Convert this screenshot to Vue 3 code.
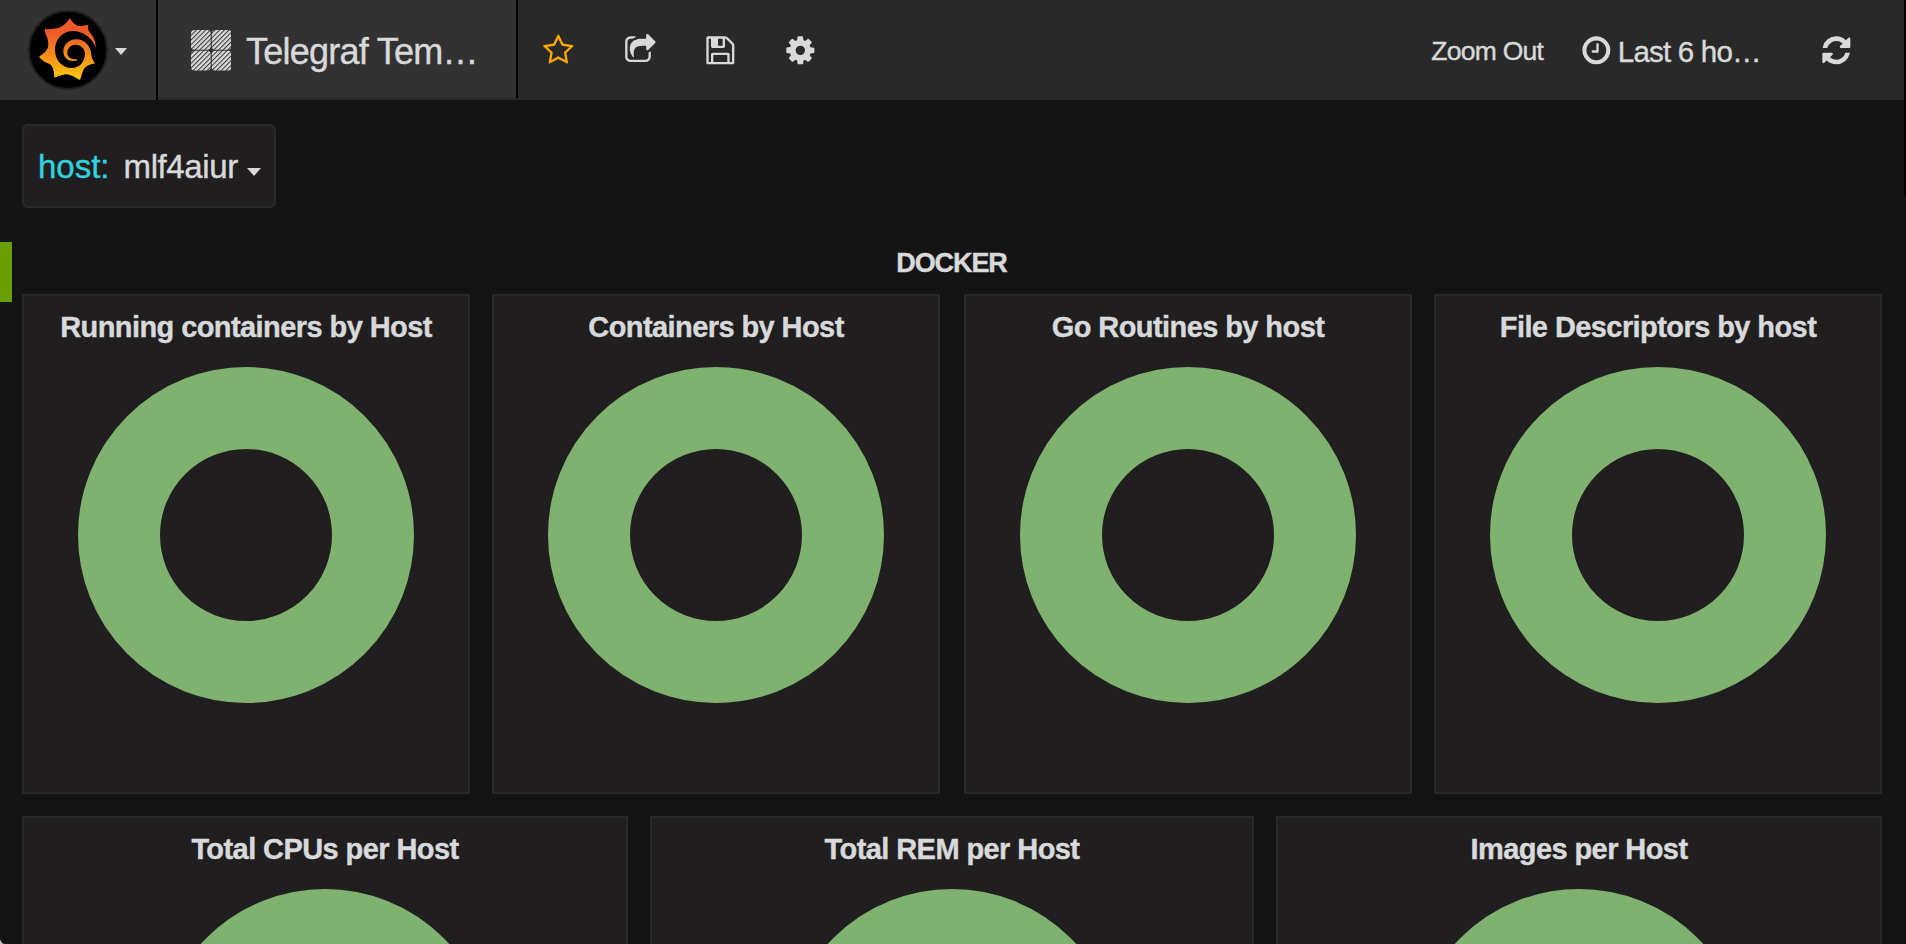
<script setup>
const paths = {
  star: 'M1201 1004l306-297-422-62-189-382-189 382-422 62 306 297-73 421 378-199 377 199zm527-357q0 22-26 48l-363 354 86 500q1 7 1 20 0 50-41 50-19 0-40-12l-449-236-449 236q-22 12-40 12-21 0-31.5-14.5t-10.5-35.5q0-6 2-20l86-500-364-354q-25-27-25-48 0-37 56-46l502-73 225-455q19-41 49-41t49 41l225 455 502 73q56 9 56 46z',
  share: 'M1472 989v259q0 119-84.5 203.5t-203.5 84.5h-832q-119 0-203.5-84.5t-84.5-203.5v-832q0-119 84.5-203.5t203.5-84.5h255q13 0 22.5 9.5t9.5 22.5q0 27-26 32-77 26-133 60-10 4-16 4h-112q-66 0-113 47t-47 113v832q0 66 47 113t113 47h832q66 0 113-47t47-113v-214q0-19 18-29 28-13 54-37 16-16 35-8 21 9 21 29zm237-496l-384 384q-18 19-45 19-12 0-25-5-39-17-39-59v-192h-160q-323 0-438 131-119 137-74 473 3 23-20 34-8 2-12 2-16 0-26-13-10-14-21-31t-39.5-68.5-49.5-99.5-38.5-114-17.5-122q0-49 3.5-91t14-90 28-88 47-81.5 68.5-74 94.5-61.5 124.5-48.5 159.5-30.5 196.5-11h160v-192q0-42 39-59 13-5 25-5 26 0 45 19l384 384q19 19 19 45t-19 45z',
  save: 'M512 1536h768v-384h-768v384zm896 0h128v-896q0-14-10-38.5t-20-34.5l-281-281q-10-10-34-20t-39-10v416q0 40-28 68t-68 28h-576q-40 0-68-28t-28-68v-416h-128v1280h128v-416q0-40 28-68t68-28h832q40 0 68 28t28 68v416zm-384-928v-320q0-13-9.5-22.5t-22.5-9.5h-192q-13 0-22.5 9.5t-9.5 22.5v320q0 13 9.5 22.5t22.5 9.5h192q13 0 22.5-9.5t9.5-22.5zm640 32v928q0 40-28 68t-68 28h-1344q-40 0-68-28t-28-68v-1344q0-40 28-68t68-28h928q40 0 88 20t76 48l280 280q28 28 48 76t20 88z',
  cog: 'M1152 896q0-106-75-181t-181-75-181 75-75 181 75 181 181 75 181-75 75-181zm512-109v222q0 12-8 23t-20 13l-185 28q-19 54-39 91 35 50 107 138 10 12 10 25t-9 23q-27 37-99 108t-94 71q-12 0-26-9l-138-108q-44 23-91 38-16 136-29 186-7 28-36 28h-222q-14 0-24.5-8.5t-11.5-21.5l-28-184q-49-16-90-37l-141 107q-10 9-25 9-14 0-25-11-126-114-165-168-7-10-7-23 0-12 8-23 15-21 51-66.5t54-70.5q-27-50-41-99l-183-27q-13-2-21-12.5t-8-23.5v-222q0-12 8-23t19-13l186-28q14-46 39-92-40-57-107-138-10-12-10-24 0-10 9-23 26-36 98.5-107.5t94.5-71.5q13 0 26 10l138 107q44-23 91-38 16-136 29-186 7-28 36-28h222q14 0 24.5 8.5t11.5 21.5l28 184q49 16 90 37l142-107q9-9 24-9 13 0 25 10 129 119 165 170 7 8 7 22 0 12-8 23-15 21-51 66.5t-54 70.5q26 50 41 98l183 28q13 2 21 12.5t8 23.5z',
  clock: 'M1024 544v448q0 14-9 23t-23 9h-320q-14 0-23-9t-9-23v-64q0-14 9-23t23-9h224v-352q0-14 9-23t23-9h64q14 0 23 9t9 23zm416 352q0-148-73-273t-198-198-273-73-273 73-198 198-73 273 73 273 198 198 273 73 273-73 198-198 73-273zm224 0q0 209-103 385.5t-279.5 279.5-385.5 103-385.5-103-279.5-279.5-103-385.5 103-385.5 279.5-279.5 385.5-103 385.5 103 279.5 279.5 103 385.5z',
  refresh: 'M1639 1056q0 5-1 7-64 268-268 434.5t-478 166.5q-146 0-282.5-55t-243.5-157l-129 129q-19 19-45 19t-45-19-19-45v-448q0-26 19-45t45-19h448q26 0 45 19t19 45-19 45l-137 137q71 66 161 102t187 36q134 0 250-65t186-179q11-17 53-117 8-23 30-23h192q13 0 22.5 9.5t9.5 22.5zm25-800v448q0 26-19 45t-45 19h-448q-26 0-45-19t-19-45 19-45l138-138q-148-137-349-137-134 0-250 65t-186 179q-11 17-53 117-8 23-30 23h-199q-13 0-22.5-9.5t-9.5-22.5v-7q65-268 270-434.5t480-166.5q146 0 284 55.5t245 156.5l130-129q19-19 45-19t45 19 19 45z'
}
const actions = ['star', 'share', 'save', 'cog']
const rows = [
  { cls: 'four', panels: ['Running containers by Host', 'Containers by Host', 'Go Routines by host', 'File Descriptors by host'] },
  { cls: 'three', panels: ['Total CPUs per Host', 'Total REM per Host', 'Images per Host'] }
]
</script>

<template>
  <div class="app">
    <header class="navbar">
      <div class="brand">
        <svg class="logo" viewBox="84 30 240 240">
          <defs>
            <linearGradient id="flame" x1="0" y1="0" x2="0" y2="1">
              <stop offset="0.25" stop-color="#f05a28" />
              <stop offset="1" stop-color="#fbca0a" />
            </linearGradient>
          </defs>
          <circle cx="204" cy="150" r="117" fill="#000" stroke="#1f1f1f" stroke-width="6" />
          <path fill="url(#flame)" d="M209 54C213 62 222 72 233 77C245 79 256 76 265 74C263 82 264 89 268 95C281 110 288 125 287 143C280 118 252 93 218 93C187 93 165 118 165 150C165 182 188 204 215 204C240 204 255 185 255 160C254 144 240 134 226 134C211 134 202 146 202 158C202 172 214 180 231 177C232 180 230 181 228 182C207 187 190 175 190 154C190 133 207 118 228 118C256 118 273 140 274 165C275 174 280 183 285 190C275 193 262 195 254 204C246 214 245 228 240 240C230 236 222 229 212 226C204 222 194 222 188 225C178 227 170 230 163 233C162 222 162 210 157 201C152 191 146 191 140 188C130 184 124 178 117 170C126 163 137 157 142 146C146 138 145 128 144 122C142 109 133 98 135 86C147 89 158 87 170 85C179 83 186 80 190 76C198 70 205 62 209 54Z" />
        </svg>
        <i class="caret"></i>
      </div>
      <div class="dashboard">
        <svg class="apps" viewBox="0 0 40.5 40.5">
          <defs>
            <pattern id="hatch" width="3.3" height="3.3" patternUnits="userSpaceOnUse" patternTransform="rotate(-45)">
              <rect width="3.3" height="3.3" fill="#d8d9da" />
              <rect width="3.3" height="1" fill="#363636" />
            </pattern>
          </defs>
          <g fill="url(#hatch)">
            <rect width="19.7" height="19.7" rx="3.5" />
            <rect x="20.8" width="19.7" height="19.7" rx="3.5" />
            <rect y="20.8" width="19.7" height="19.7" rx="3.5" />
            <rect x="20.8" y="20.8" width="19.7" height="19.7" rx="3.5" />
          </g>
        </svg>
        <span class="name">Telegraf Tem…</span>
      </div>
      <nav class="actions">
        <svg v-for="a in actions" :key="a" :class="['icon', a]" viewBox="0 0 1792 1792"><path :d="paths[a]" /></svg>
      </nav>
      <div class="time">
        <span class="zoom">Zoom Out</span>
        <svg class="icon clock" viewBox="0 0 1792 1792"><path :d="paths.clock" /></svg>
        <span class="range">Last 6 ho…</span>
        <svg class="icon refresh" viewBox="0 0 1792 1792"><path :d="paths.refresh" /></svg>
      </div>
    </header>

    <div class="submenu">
      <div class="variable">
        <span class="label">host:</span>
        <span class="value">mlf4aiur</span>
        <i class="caret"></i>
      </div>
    </div>

    <div class="row-head">
      <i class="handle"></i>
      <h2>DOCKER</h2>
    </div>

    <section v-for="row in rows" :key="row.cls" :class="['row', row.cls]">
      <article v-for="p in row.panels" :key="p" class="panel">
        <h3>{{ p }}</h3>
        <svg class="donut" viewBox="0 0 336 336"><circle cx="168" cy="168" r="127" /></svg>
      </article>
    </section>
    <i class="edge"></i>
    <i class="corner"></i>
  </div>
</template>

<style>
body { background: #141414; overflow: hidden; }
</style>

<style scoped>
* { box-sizing: border-box; }
.app { position: relative; width: 1906px; height: 944px; overflow: hidden; background: #141414; color: #d8d9da; font-family: "Liberation Sans", Arial, sans-serif; -webkit-text-stroke: 0.4px; }
.navbar { display: flex; height: 100px; background: #292929; }
.brand { display: flex; align-items: center; width: 158px; padding-left: 28px; background: #323232; border-right: 2px solid #000; }
.logo { width: 80px; height: 80px; }
.caret { width: 0; height: 0; border: solid transparent; border-width: 7px 6px 0; border-top-color: #d8d9da; }
.brand .caret { margin: 3px 0 0 7px; }
.dashboard { display: flex; align-items: center; width: 360px; height: 98px; padding: 3px 0 0 32.5px; background: #323232; border-right: 2px solid #000; }
.apps { flex: none; width: 40.5px; height: 40.5px; }
.name { margin: 2px 0 0 15px; font-size: 36px; letter-spacing: -0.75px; white-space: nowrap; }
.icon { flex: none; width: 32.67px; height: 32.67px; fill: #d8d9da; }
.actions { display: flex; align-items: center; padding: 1px 0 0 24px; }
.star { fill: #ffa500; margin-right: 49px; }
.share { margin-right: 48px; }
.save { margin-right: 47px; }
.time { display: flex; align-items: center; margin-left: auto; padding: 1px 53.5px 0 0; white-space: nowrap; }
.zoom { margin: 2px 37px 0 0; font-size: 26.5px; letter-spacing: -0.75px; }
.range { width: 149px; margin: 3px 53px 0 5px; font-size: 29.5px; letter-spacing: -0.8px; }
.submenu { padding: 24px 22px 0; }
.variable { display: flex; align-items: center; width: 254px; height: 84px; padding: 2px 0 0 14px; background: #201e1f; border: 2px solid #292929; border-radius: 6px; font-size: 33px; }
.label { margin-right: 14px; color: #32d1df; }
.value { letter-spacing: -0.4px; }
.variable .caret { margin: 9px 0 0 9px; border-width: 8px 7px 0; }
.row-head { position: relative; height: 86px; padding-top: 39px; }
.handle { position: absolute; left: 0; top: 34px; width: 12px; height: 60px; background: #6a9f00; }
h2 { margin: 0; padding-right: 3px; text-align: center; font-size: 27px; line-height: 32px; letter-spacing: -1.1px; font-weight: 700; }
.row { display: grid; margin: 0 24px 22px 22px; }
.four { grid-template-columns: 470px 472px 470px 448px; }
.four .panel { width: 448px; }
.three { grid-template-columns: 606px 604px 606px; column-gap: 22px; }
.panel { display: flex; flex-direction: column; align-items: center; height: 500px; background: #201e1f; border: 2px solid #292929; }
h3 { margin: 14px 0 22px; font-size: 29px; line-height: 35px; letter-spacing: -0.58px; font-weight: 700; white-space: nowrap; }
.donut { width: 336px; height: 336px; fill: none; stroke: #7fb26e; stroke-width: 82px; }
.edge { position: absolute; right: 0; top: 0; width: 2px; height: 196px; background: #000; }
.corner { position: absolute; left: 0; bottom: 0; width: 5px; height: 9px; background: radial-gradient(ellipse 6px 10px at 100% 0, transparent 85%, #ccc 100%); }
</style>
